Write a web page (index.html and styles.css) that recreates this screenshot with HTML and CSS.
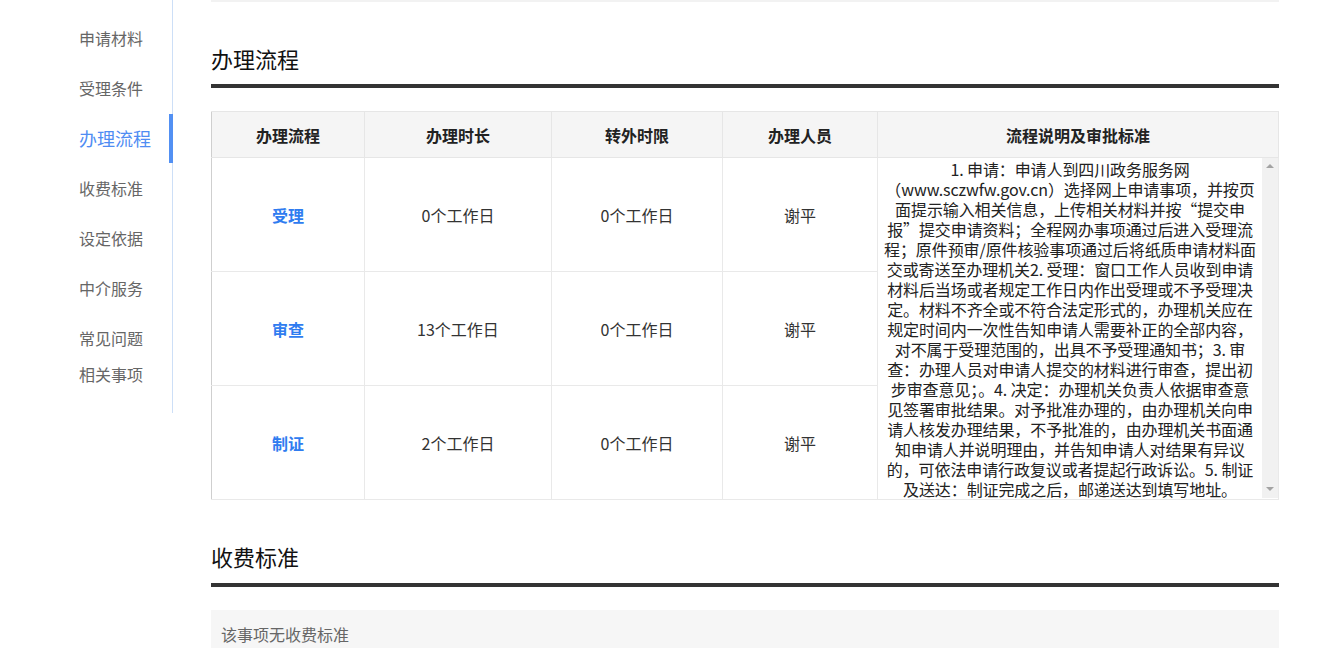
FILE: index.html
```html
<!DOCTYPE html>
<html lang="zh-CN">
<head>
<meta charset="utf-8">
<title>办理流程</title>
<link rel="stylesheet" href="styles.css">
</head>
<body>
<div class="page">
  <aside class="sidebar">
    <ul class="nav">
      <li class="nav-item">申请材料</li>
      <li class="nav-item">受理条件</li>
      <li class="nav-item active">办理流程</li>
      <li class="nav-item">收费标准</li>
      <li class="nav-item">设定依据</li>
      <li class="nav-item">中介服务</li>
      <li class="nav-item short first-short">常见问题</li>
      <li class="nav-item short">相关事项</li>
    </ul>
  </aside>
  <main class="main">
    <div class="prev-edge"></div>
    <section class="section">
      <h2 class="section-title">办理流程</h2>
      <table class="flow-table">
        <colgroup>
          <col class="c1"><col class="c2"><col class="c3"><col class="c4"><col class="c5">
        </colgroup>
        <thead>
          <tr>
            <th>办理流程</th>
            <th>办理时长</th>
            <th>转外时限</th>
            <th>办理人员</th>
            <th>流程说明及审批标准</th>
          </tr>
        </thead>
        <tbody>
          <tr>
            <td class="step">受理</td>
            <td>0个工作日</td>
            <td>0个工作日</td>
            <td>谢平</td>
            <td class="desc-cell" rowspan="3">
              <div class="desc-wrap">
                <div class="desc-text">1. 申请：申请人到四川政务服务网<br>（www.sczwfw.gov.cn）选择网上申请事项，并按页<br>面提示输入相关信息，上传相关材料并按“提交申<br>报”提交申请资料；全程网办事项通过后进入受理流<br>程；原件预审/原件核验事项通过后将纸质申请材料面<br>交或寄送至办理机关2. 受理：窗口工作人员收到申请<br>材料后当场或者规定工作日内作出受理或不予受理决<br>定。材料不齐全或不符合法定形式的，办理机关应在<br>规定时间内一次性告知申请人需要补正的全部内容，<br>对不属于受理范围的，出具不予受理通知书；3. 审<br>查：办理人员对申请人提交的材料进行审查，提出初<br>步审查意见；。4. 决定：办理机关负责人依据审查意<br>见签署审批结果。对予批准办理的，由办理机关向申<br>请人核发办理结果，不予批准的，由办理机关书面通<br>知申请人并说明理由，并告知申请人对结果有异议<br>的，可依法申请行政复议或者提起行政诉讼。5. 制证<br>及送达：制证完成之后，邮递送达到填写地址。</div>
                <div class="fake-scroll">
                  <span class="arrow up"></span>
                  <span class="arrow down"></span>
                </div>
              </div>
            </td>
          </tr>
          <tr>
            <td class="step">审查</td>
            <td>13个工作日</td>
            <td>0个工作日</td>
            <td>谢平</td>
          </tr>
          <tr>
            <td class="step">制证</td>
            <td>2个工作日</td>
            <td>0个工作日</td>
            <td>谢平</td>
          </tr>
        </tbody>
      </table>
    </section>
    <section class="section section-fee">
      <h2 class="section-title">收费标准</h2>
      <div class="note-box">该事项无收费标准</div>
    </section>
  </main>
</div>
</body>
</html>
```

FILE: styles.css
```css
* { box-sizing: border-box; }
html, body {
  margin: 0;
  padding: 0;
  background: #fff;
  font-family: "Noto Sans CJK SC", "Microsoft YaHei", sans-serif;
  color: #333;
}
.page {
  display: flex;
  align-items: flex-start;
  width: 1317px;
  height: 648px;
  overflow: hidden;
}
.sidebar {
  width: 173px;
  flex: none;
  border-right: 1px solid #cddff7;
  padding: 13px 0 21px 0;
}
.nav {
  list-style: none;
  margin: 0;
  padding: 0;
}
.nav-item {
  position: relative;
  height: 50px;
  line-height: 50px;
  padding-left: 79px;
  font-size: 16px;
  color: #666;
  white-space: nowrap;
}
.nav-item.active {
  font-size: 18px;
  color: #4f8cf3;
}
.nav-item.active::after {
  content: "";
  position: absolute;
  right: -1px;
  top: 1px;
  width: 4px;
  height: 49px;
  background: #5290f3;
}
.nav-item.short {
  height: 36px;
  line-height: 36px;
}
.nav-item.first-short { margin-top: 7px; }

.main {
  flex: 1;
  margin: 0 38px;
  min-width: 0;
}
.prev-edge {
  height: 2px;
  background: #f2f2f2;
}
.section {
  padding-top: 41px;
}
.section-title {
  margin: 0;
  font-size: 22px;
  line-height: 30px;
  font-weight: normal;
  color: #111;
  padding-bottom: 11px;
  border-bottom: 4px solid #333;
}
.section-fee { padding-top: 41px; }
.section-fee .section-title { padding-bottom: 12px; }

.flow-table {
  margin-top: 23px;
  width: 100%;
  border-collapse: collapse;
  table-layout: fixed;
  font-size: 16px;
  border-right: 1px solid #e6e6e6;
  border-bottom: 1px solid #cccccc;
}
.c1 { width: 153px; }
.c2 { width: 187px; }
.c3 { width: 171px; }
.c4 { width: 155px; }
.c5 { width: auto; }
.flow-table th {
  height: 46px;
  background: #f5f5f5;
  font-weight: bold;
  color: #222;
  text-align: center;
  border: 1px solid #e6e6e6;
  padding: 0;
}
.flow-table td {
  height: 114px;
  text-align: center;
  color: #333;
  border: 1px solid #e9e9e9;
  padding: 0;
}
.flow-table th:first-child,
.flow-table td.step { border-left: 1px solid #cfcfcf; }
.flow-table td.step {
  color: #2f7cf0;
  font-weight: bold;
}
.flow-table td.desc-cell {
  vertical-align: top;
  padding: 0;
  height: auto;
}
.desc-wrap {
  display: flex;
  height: 340px;
  overflow: hidden;
}
.desc-text {
  flex: 1;
  min-width: 0;
  padding-top: 1px;
  font-size: 16px;
  line-height: 20px;
  text-align: center;
  white-space: nowrap;
  color: #222;
  letter-spacing: -0.1px;
}
.fake-scroll {
  position: relative;
  width: 16px;
  flex: none;
  background: #f1f1f1;
}
.arrow {
  position: absolute;
  left: 4px;
  width: 0;
  height: 0;
  border-left: 4px solid transparent;
  border-right: 4px solid transparent;
}
.arrow.up {
  top: 6px;
  border-bottom: 4px solid #a3a3a3;
}
.arrow.down {
  bottom: 7px;
  border-top: 4px solid #a3a3a3;
}
.note-box {
  margin-top: 23px;
  background: #f6f6f6;
  padding: 13px 10px;
  font-size: 16px;
  line-height: 22px;
  color: #666;
  height: 60px;
}
```
